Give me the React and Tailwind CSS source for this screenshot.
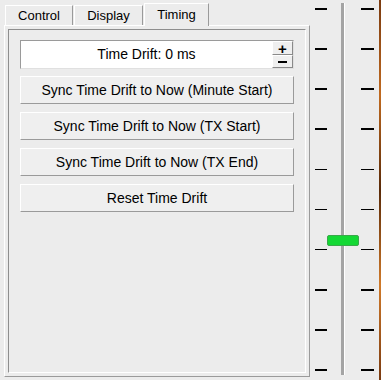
import React from "react";

const font = { fontFamily: '"Liberation Sans", Arial, sans-serif' };

function Tab({ label, active, w }) {
  if (active) {
    return (
      <div
        className={`${w} h-[23px] -mb-px bg-[#ececec] border-l border-t border-r border-l-white border-t-white border-r-[#9a9a9a] flex items-center justify-center text-[13px] text-black relative z-10`}
      >
        {label}
      </div>
    );
  }
  return (
    <div
      className={`${w} h-[20px] border-l border-t border-r border-l-white border-t-white border-r-[#9a9a9a] flex items-center justify-center text-[13px] text-black`}
    >
      {label}
    </div>
  );
}

function Btn({ children }) {
  return (
    <div className="h-[28px] bg-[#efefef] border border-t-white border-l-white border-r-[#9a9a9a] border-b-[#9a9a9a] flex items-center justify-center text-[14px] text-black">
      {children}
    </div>
  );
}

function Ticks() {
  return (
    <div className="flex flex-col justify-between pt-[8px] pb-[9px] h-full">
      {Array.from({ length: 10 }).map((_, i) => (
        <div key={i} className="h-[1.5px] bg-black" />
      ))}
    </div>
  );
}

export default function App() {
  return (
    <div
      className="w-[381px] h-[380px] bg-[#ececec] flex overflow-hidden"
      style={font}
    >
      {/* Left tab widget */}
      <div className="w-[306px] ml-[4px] flex flex-col pt-[3px] pb-[3px]">
        <div className="flex items-end h-[22px] pl-px gap-[1px]">
          <Tab label="Control" w="w-[68px]" />
          <Tab label="Display" w="w-[69px]" />
          <Tab label="Timing" w="w-[65px]" active />
        </div>
        <div className="flex-1 border border-t-white border-l-white border-r-[#9a9a9a] border-b-[#9a9a9a] p-[3px]">
          <div className="h-full border border-t-[#8e8e8e] border-l-[#8e8e8e] border-r-white border-b-white px-[11px] pt-[10px] flex flex-col">
            {/* Spin box */}
            <div className="h-[29px] flex bg-white border border-t-[#9a9a9a] border-l-[#9a9a9a] border-r-[#e0e0e0] border-b-[#e0e0e0]">
              <div className="flex-1 flex items-center justify-center text-[14px] text-black">
                Time Drift: 0 ms
              </div>
              <div className="w-[21px] flex flex-col bg-[#ececec]">
                <div className="h-[14px] bg-[#efefef] border border-t-white border-l-white border-r-[#8a8a8a] border-b-[#8a8a8a] flex items-center justify-center text-[15px] font-bold leading-none text-black">
                  +
                </div>
                <div className="h-[13px] bg-[#efefef] border border-t-white border-l-white border-r-[#8a8a8a] border-b-[#8a8a8a] flex items-center justify-center">
                  <div className="w-[9px] h-[2px] bg-black" />
                </div>
              </div>
            </div>
            <div className="flex flex-col gap-[8px] mt-[7px]">
              <Btn>Sync Time Drift to Now (Minute Start)</Btn>
              <Btn>Sync Time Drift to Now (TX Start)</Btn>
              <Btn>Sync Time Drift to Now (TX End)</Btn>
              <Btn>Reset Time Drift</Btn>
            </div>
          </div>
        </div>
      </div>

      {/* Slider */}
      <div className="flex-1 relative flex h-full">
        <div className="w-[12px] ml-[5px] h-full">
          <Ticks />
        </div>
        <div className="ml-[14px] h-full pt-[3px] pb-[5px] flex">
          <div className="w-[3px] h-full bg-[#a4a4a4]" />
          <div className="w-px h-full bg-white" />
        </div>
        <div className="w-[13px] ml-[16px] h-full">
          <Ticks />
        </div>
        <div className="absolute left-[17px] top-[235px] w-[32px] h-[11px] rounded-[2px] bg-[#14d834] border border-[#3aa84a]" />
        <div className="ml-auto w-[2px] h-full bg-[linear-gradient(180deg,#7a3a10,#c06a20,#5a2a08,#d07a2a,#7a3a10)]" />
      </div>
    </div>
  );
}
